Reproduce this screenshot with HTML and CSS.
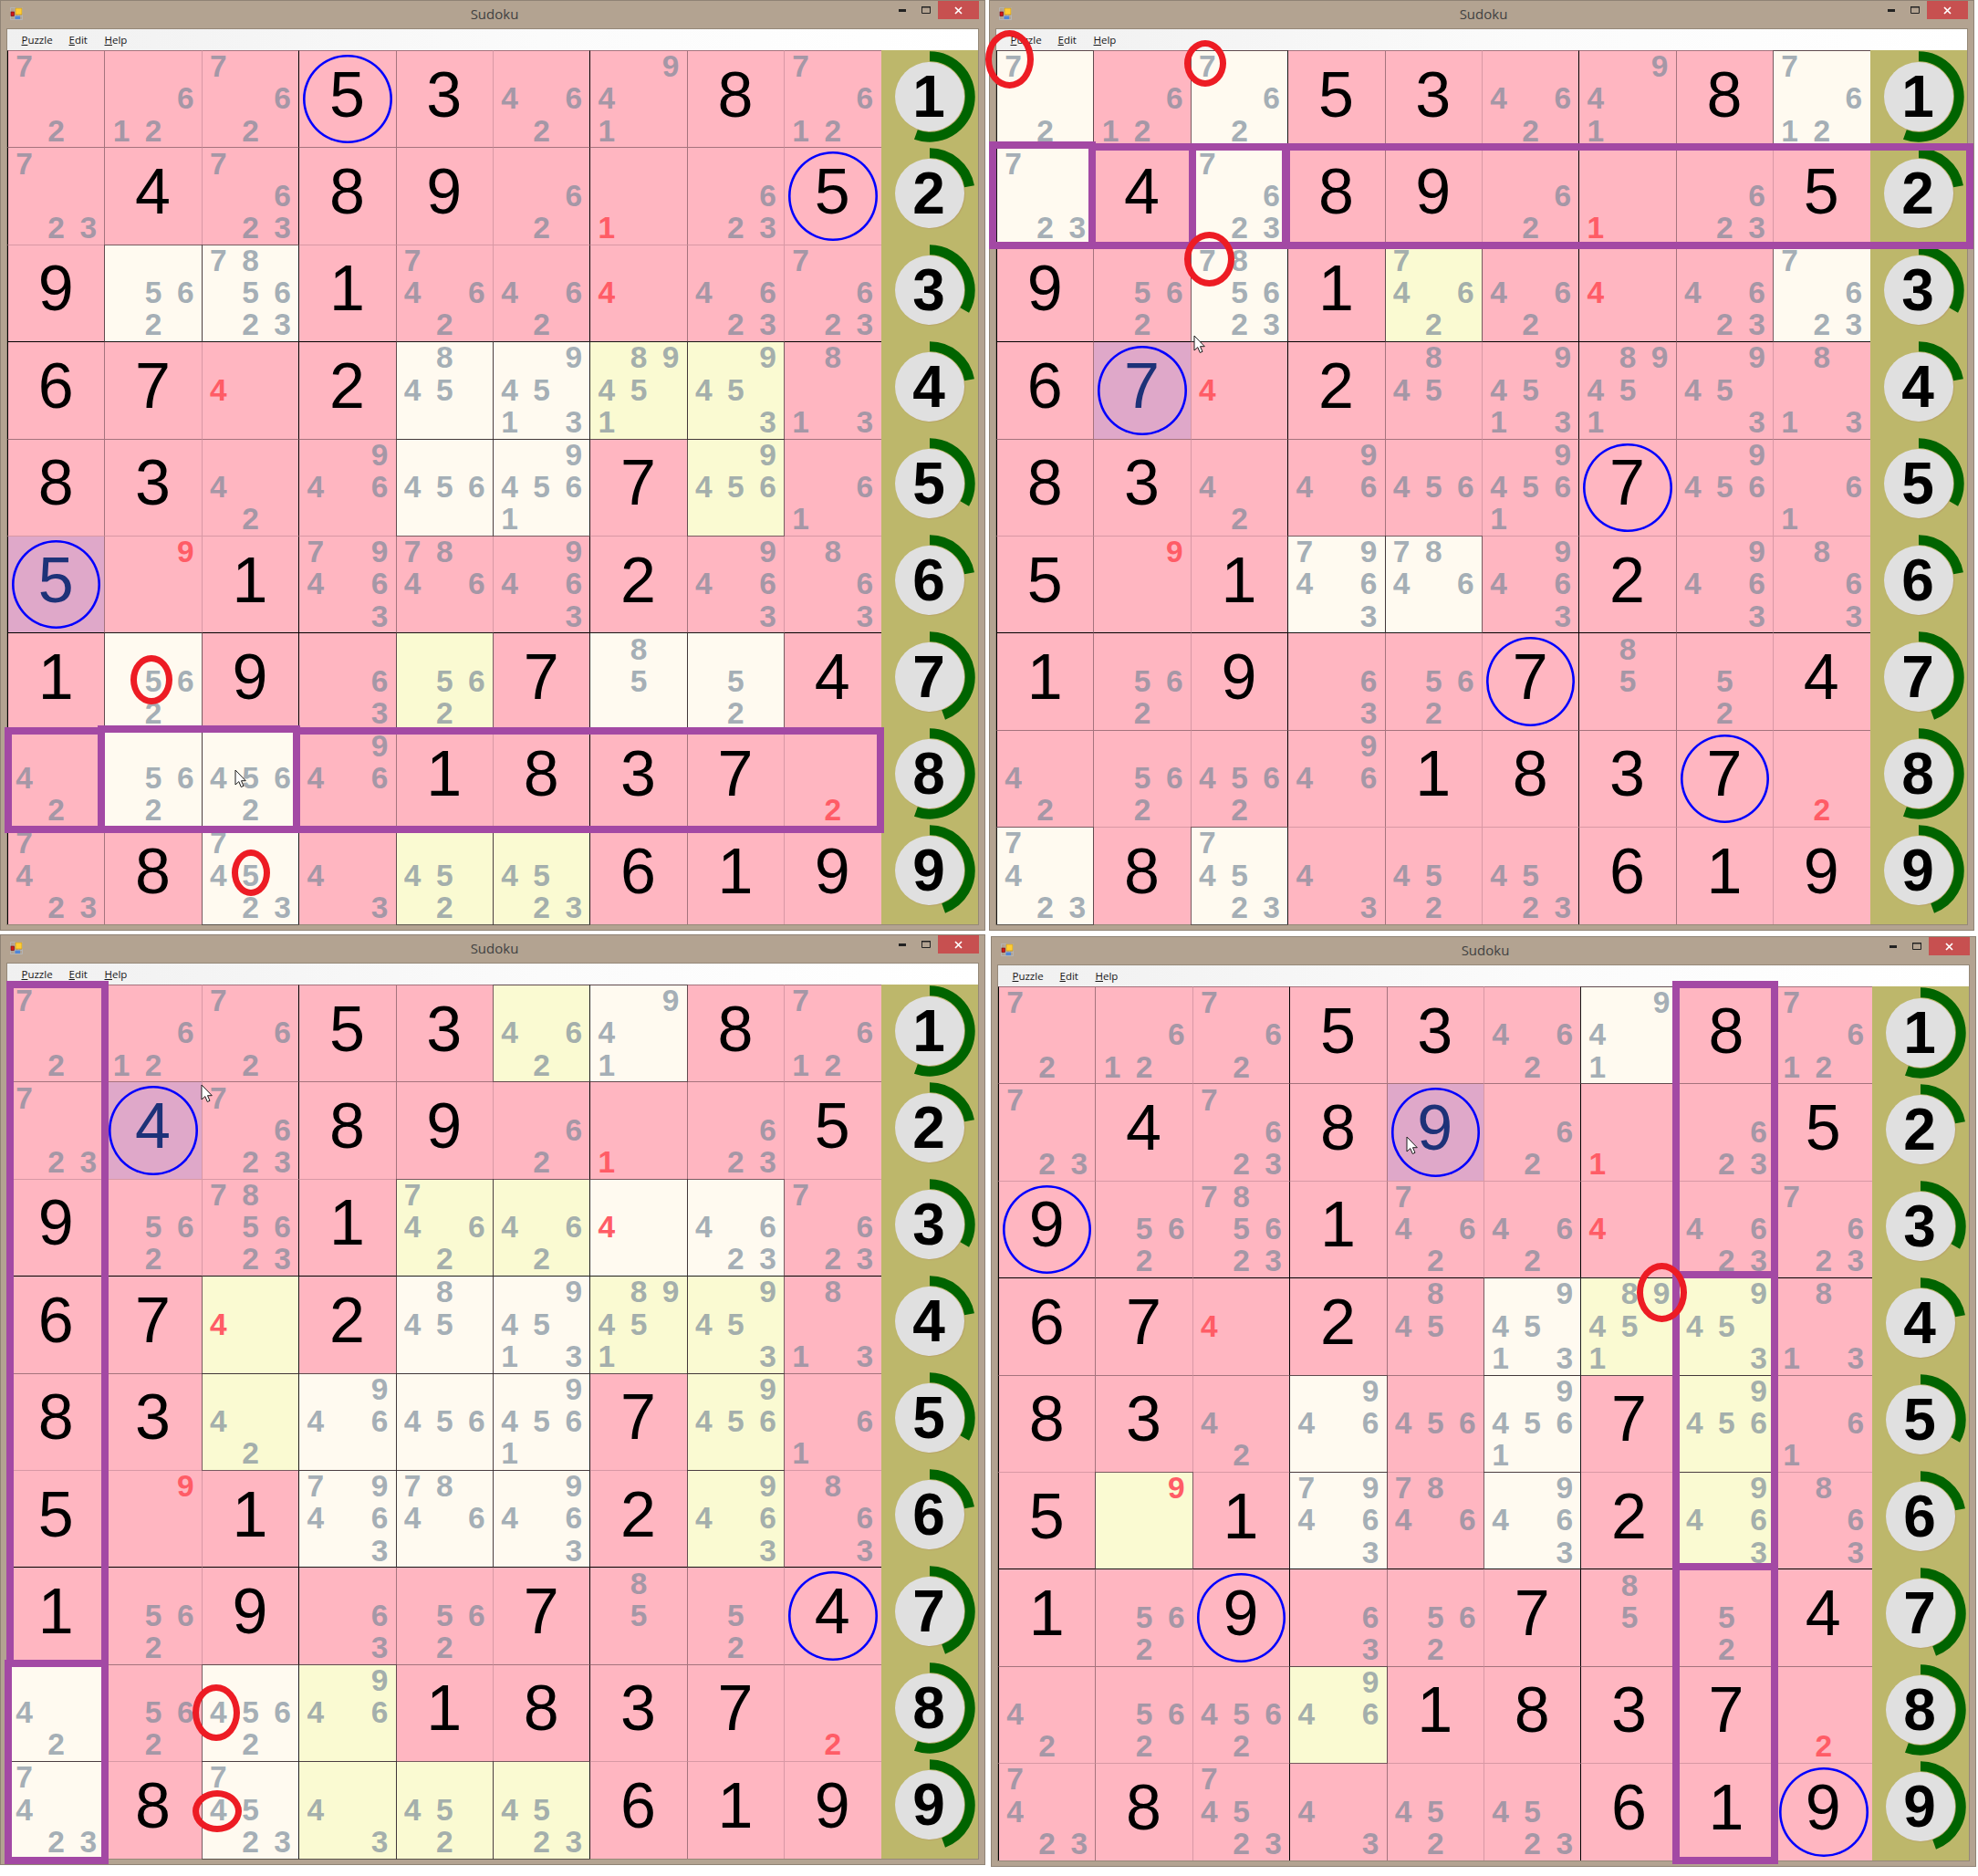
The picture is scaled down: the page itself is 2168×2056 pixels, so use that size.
FILE: index.html
```html
<!DOCTYPE html>
<html lang="en">
<head>
<meta charset="utf-8">
<title>Sudoku</title>
<link rel="stylesheet" href="styles.css">
</head>
<body>
<main class="desktop" id="desktop"></main>

<template id="window-template">
  <section class="window">
    <header class="titlebar">
      <svg class="app-icon" width="14" height="14" viewBox="0 0 14 14">
        <path d="M.5.5h13v13H.5zM5 .5v13M9.5.5v13M.5 5h13M.5 9.5h13" fill="none" stroke="#b4b4b4"/>
        <rect x="6" y="1" width="7" height="7" fill="#ffcc33" stroke="#c9951a" stroke-width=".7"/>
        <rect x="1" y="5" width="3.4" height="4.6" fill="#d01818" stroke="#7a1010" stroke-width=".7"/>
        <rect x="5.5" y="9.6" width="5.6" height="3.4" fill="#4f86d8"/>
      </svg>
      <h1 class="title">Sudoku</h1>
      <div class="controls">
        <span class="control"><svg width="8" height="3" viewBox="0 0 8 3"><rect width="8" height="3" fill="#222"/></svg></span>
        <span class="control"><svg width="10" height="8" viewBox="0 0 10 8"><path d="M.5 1h9v6.500h-9z" fill="none" stroke="#222"/><path d="M0 .5h10" stroke="#222"/></svg></span>
        <span class="control control-close"><svg width="9" height="9" viewBox="0 0 9 9"><path d="M1 1l7 7M8 1l-7 7" stroke="#fff" stroke-width="1.700"/></svg></span>
      </div>
    </header>
    <div class="client">
      <nav class="menu">
        <span class="menu-item menu-puzzle"><u>P</u>uzzle</span>
        <span class="menu-item menu-edit"><u>E</u>dit</span>
        <span class="menu-item"><u>H</u>elp</span>
      </nav>
      <div class="play">
        <div class="board"></div>
        <aside class="rail"></aside>
      </div>
    </div>
  </section>
</template>

<script src="app.js"></script>
</body>
</html>
```

FILE: styles.css
```css
* { box-sizing: border-box; }
html, body { margin: 0; background: #fff; overflow: hidden; }
body { width: 2168px; height: 2056px; font-family: "Liberation Sans", Arial, sans-serif; }

.desktop {
  display: grid;
  grid-template-columns: 1080px 1080px;
  grid-auto-rows: 1020px;
  gap: 4px;
}

.window {
  position: relative;
  width: 1080px;
  height: 1020px;
  padding: 0 7px;
  background: #b3a391;
  border: 1px solid #8f8375;
}
.window-offset { margin: 2px 0 0 2px; }

.titlebar {
  display: grid;
  grid-template-columns: 1fr auto 1fr;
  height: 31px;
  margin: 0 -1px 0 -1px;
  padding-left: 4px;
}
.app-icon { margin-top: 7px; }
.title {
  margin: 0;
  font: 400 15px/28px "Open Sans", sans-serif;
  color: #414141;
}
.controls { display: flex; justify-self: end; align-items: flex-start; }
.control { display: flex; align-items: center; justify-content: center; width: 26px; height: 20px; }
.control svg { display: block; }
.control-close { width: 45px; background: #c75050; }

.client { box-shadow: 0 0 0 1px #958878; }
.menu {
  display: flex;
  align-items: center;
  height: 23px;
  padding-left: 15.500px;
  background: linear-gradient(90deg, #f0f0f0 0%, #fbfbfb 55%, #ffffff 100%);
  font: 400 11.500px/1 "Open Sans", sans-serif;
  color: #161616;
}
.menu-puzzle { width: 52px; }
.menu-edit { width: 39px; }

.play { display: flex; }
.board {
  display: grid;
  flex: none;
  width: 957.600px;
  grid-template-columns: repeat(9, 106.400px);
  grid-template-rows: repeat(9, 106.400px);
}
.cell {
  position: relative;
  display: flex;
  align-items: center;
  justify-content: center;
  min-width: 0;
  border-style: solid;
  border-width: 1px 0 0 1px;
  border-color: #a5737d;
  background: #ffb6c1;
}
.col-pale { border-left-color: #d898a5; }
.row-pale { border-top-color: #d898a5; }
.col-box { border-left-color: #000; }
.row-box { border-top-color: #000; }

.cell-cream { background: #fffaf0; }
.cell-yellow { background: #fafad2; }
.cell-selected { background: #dfa8c9; }
.cell-cream::after, .cell-yellow::after {
  content: "";
  position: absolute;
  inset: -1px -1px -1px -1px;
  z-index: 1;
  border: 1px solid rgba(40, 40, 40, .55);
}
.cell-edge::after { right: 0; border-right: 0; }

.given { padding: 0 1px 10px 0; font-size: 70px; line-height: 1; color: #000; }
.cell-selected .given { color: #1d3278; }
.ring-blue {
  position: absolute;
  inset: 4px;
  border-radius: 50%;
  box-shadow: inset 0 0 0 2.600px #0000ff;
}

.notes {
  display: grid;
  width: 100%;
  height: 100%;
  grid-template-columns: repeat(3, 1fr);
  grid-template-rows: repeat(3, 1fr);
  font-size: 33.500px;
  font-weight: 700;
  color: rgba(119, 136, 153, .68);
}
.note { display: flex; align-items: center; justify-content: center; line-height: 1; padding-bottom: 1px; }
.note-red { color: #ff5c66; }
.n7 { grid-area: 1 / 1; } .n8 { grid-area: 1 / 2; } .n9 { grid-area: 1 / 3; }
.n4 { grid-area: 2 / 1; } .n5 { grid-area: 2 / 2; } .n6 { grid-area: 2 / 3; }
.n1 { grid-area: 3 / 1; } .n2 { grid-area: 3 / 2; } .n3 { grid-area: 3 / 3; }

.rail { flex: 1; background: #bdb76b; }
.rail-item {
  display: flex;
  align-items: center;
  justify-content: center;
  height: 106px;
  padding-bottom: 4.600px;
}
.disc {
  position: relative;
  display: flex;
  align-items: center;
  justify-content: center;
  width: 76px;
  height: 76px;
  padding-right: 1.500px;
  border-radius: 50%;
  background: #e0e0e0;
  box-shadow: 1px 1px 1px #b9a668;
  font-size: 64px;
  font-weight: 700;
  line-height: 1;
  color: #000;
}
.arc { position: absolute; left: -12px; top: -12px; }
.arc path { fill: none; stroke: #006400; stroke-width: 11; }

.frame { position: absolute; z-index: 2; border: 8px solid #a349a4; }
.ring-red { position: absolute; z-index: 3; border: 7.500px solid #ed1c24; border-radius: 50%; }
.pointer { position: absolute; z-index: 4; }
.pointer path { fill: #fff; stroke: #1c1c1c; stroke-width: 1; }
```

FILE: app.js
```js
// Pencil marks: digits are candidates, "=n" a placed digit, "!n" a candidate in red.
const PUZZLE = [
  "72 612 762 =5 =3 462 941 =8 7612",
  "723 =4 7623 =8 =9 62 !1 623 =5",
  "=9 562 785623 =1 7462 462 !4 4623 7623",
  "=6 =7 !4 =2 845 94513 89451 9453 813",
  "=8 =3 42 946 456 94561 =7 9456 61",
  "=5 !9 =1 79463 7846 9463 =2 9463 863",
  "=1 562 =9 63 562 =7 85 52 =4",
  "42 562 4562 946 =1 =8 =3 =7 !2",
  "7423 =8 74523 43 452 4523 =6 =1 =9"
].map(row => row.split(" "));

// Per window: selected digit and cell, lit cells (row+col), overlays in window pixels.
const WINDOWS = [
  {
    digit: "5", selected: "61",
    cream: "32 33 45 46 55 56 72 77 78 82 83 93",
    yellow: "47 48 58 75 95 96",
    frames: [[5, 797, 110, 116], [107, 795, 222, 118], [321, 797, 648, 116]],
    rings: [[166, 745, 23, 27], [275, 956, 21, 25.5]],
    pointer: [258, 844]
  },
  {
    digit: "7", selected: "42",
    cream: "11 13 19 21 23 33 39 64 65 91 93",
    yellow: "35",
    frames: [[0, 155, 117, 118], [109, 157, 118, 116], [219, 157, 110, 116], [322, 157, 757, 116]],
    rings: [[22.5, 65, 26.5, 32], [237, 69.5, 23, 25.5], [241.5, 284, 27.5, 30]],
    pointer: [225.4, 368]
  },
  {
    digit: "4", selected: "22",
    cream: "17 37 38 45 46 54 55 56 64 65 66 81 83 91 93",
    yellow: "16 35 36 43 47 48 53 58 68 84 94 95 96",
    frames: [[7, 51, 112, 752], [5, 795, 114, 224]],
    rings: [[236.5, 853, 26, 31], [238, 961, 27, 23]],
    pointer: [221, 165]
  },
  {
    digit: "9", selected: "25",
    cream: "17 46 54 56 64 66",
    yellow: "47 48 58 62 68 84",
    frames: [[747, 48.5, 116, 326.5], [747, 367, 116, 328], [747, 687, 116, 329.5]],
    rings: [[735.5, 390, 27.5, 32.5]],
    pointer: [456, 219.7]
  }
];

const SVG = "http://www.w3.org/2000/svg";

function el(className, text) {
  const node = document.createElement("div");
  node.className = className;
  if (text !== undefined) node.textContent = text;
  return node;
}

function place(node, left, top, width, height) {
  node.style.left = left + "px";
  node.style.top = top + "px";
  if (width !== undefined) {
    node.style.width = width + "px";
    node.style.height = height + "px";
  }
  return node;
}

function buildCell(token, r, c, spec) {
  const key = "" + (r + 1) + (c + 1);
  const classes = ["cell"];
  if (c % 3 === 0) classes.push("col-box");
  if (c % 3 === 2) classes.push("col-pale");
  if (r % 3 === 0 && r > 0) classes.push("row-box");
  if (r % 3 === 2) classes.push("row-pale");
  if (c === 8) classes.push("cell-edge");
  if (spec.cream.split(" ").includes(key)) classes.push("cell-cream");
  if (spec.yellow.split(" ").includes(key)) classes.push("cell-yellow");
  if (spec.selected === key) classes.push("cell-selected");
  const cell = el(classes.join(" "));

  if (token[0] === "=") {
    const value = token[1];
    cell.appendChild(el("given", value));
    if (value === spec.digit) cell.appendChild(el("ring-blue"));
  } else {
    const notes = el("notes");
    const red = token[0] === "!";
    for (const d of token.replace("!", "")) {
      notes.appendChild(el("note n" + d + (red ? " note-red" : ""), d));
    }
    cell.appendChild(notes);
  }
  return cell;
}

function buildArc(count) {
  const svg = document.createElementNS(SVG, "svg");
  svg.setAttribute("class", "arc");
  svg.setAttribute("width", 100);
  svg.setAttribute("height", 100);
  svg.setAttribute("viewBox", "0 0 100 100");
  const path = document.createElementNS(SVG, "path");
  const angle = (count / 9) * 2 * Math.PI;
  const r = 44.2;
  const x = 50 + r * Math.sin(angle);
  const y = 50 - r * Math.cos(angle);
  path.setAttribute("d", `M50 ${50 - r}A${r} ${r} 0 ${count > 4.5 ? 1 : 0} 1 ${x.toFixed(2)} ${y.toFixed(2)}`);
  svg.appendChild(path);
  return svg;
}

function buildPointer(left, top) {
  const svg = document.createElementNS(SVG, "svg");
  svg.setAttribute("class", "pointer");
  svg.setAttribute("width", 14);
  svg.setAttribute("height", 21);
  svg.setAttribute("viewBox", "0 0 14 21");
  const path = document.createElementNS(SVG, "path");
  path.setAttribute("d", "M1 1V17L4.800 13.600L7.300 19.500L10 18.300L7.500 12.700H12.300Z");
  svg.appendChild(path);
  return place(svg, left - 1, top - 1);
}

const placed = {};
PUZZLE.flat().forEach(t => { if (t[0] === "=") placed[t[1]] = (placed[t[1]] || 0) + 1; });

const desktop = document.getElementById("desktop");
const template = document.getElementById("window-template");

WINDOWS.forEach((spec, index) => {
  const win = template.content.firstElementChild.cloneNode(true);
  if (index === 3) win.classList.add("window-offset");

  const board = win.querySelector(".board");
  PUZZLE.forEach((row, r) => row.forEach((token, c) => board.appendChild(buildCell(token, r, c, spec))));

  const rail = win.querySelector(".rail");
  for (let d = 1; d <= 9; d++) {
    const item = el("rail-item");
    const disc = el("disc", String(d));
    disc.appendChild(buildArc(placed[d] || 0));
    item.appendChild(disc);
    rail.appendChild(item);
  }

  spec.frames.forEach(f => win.appendChild(place(el("frame"), f[0] - 1, f[1] - 1, f[2], f[3])));
  spec.rings.forEach(e => win.appendChild(place(el("ring-red"), e[0] - e[2] - 1, e[1] - e[3] - 1, e[2] * 2, e[3] * 2)));
  win.appendChild(buildPointer(spec.pointer[0] - 1, spec.pointer[1] - 1));

  desktop.appendChild(win);
});
```
